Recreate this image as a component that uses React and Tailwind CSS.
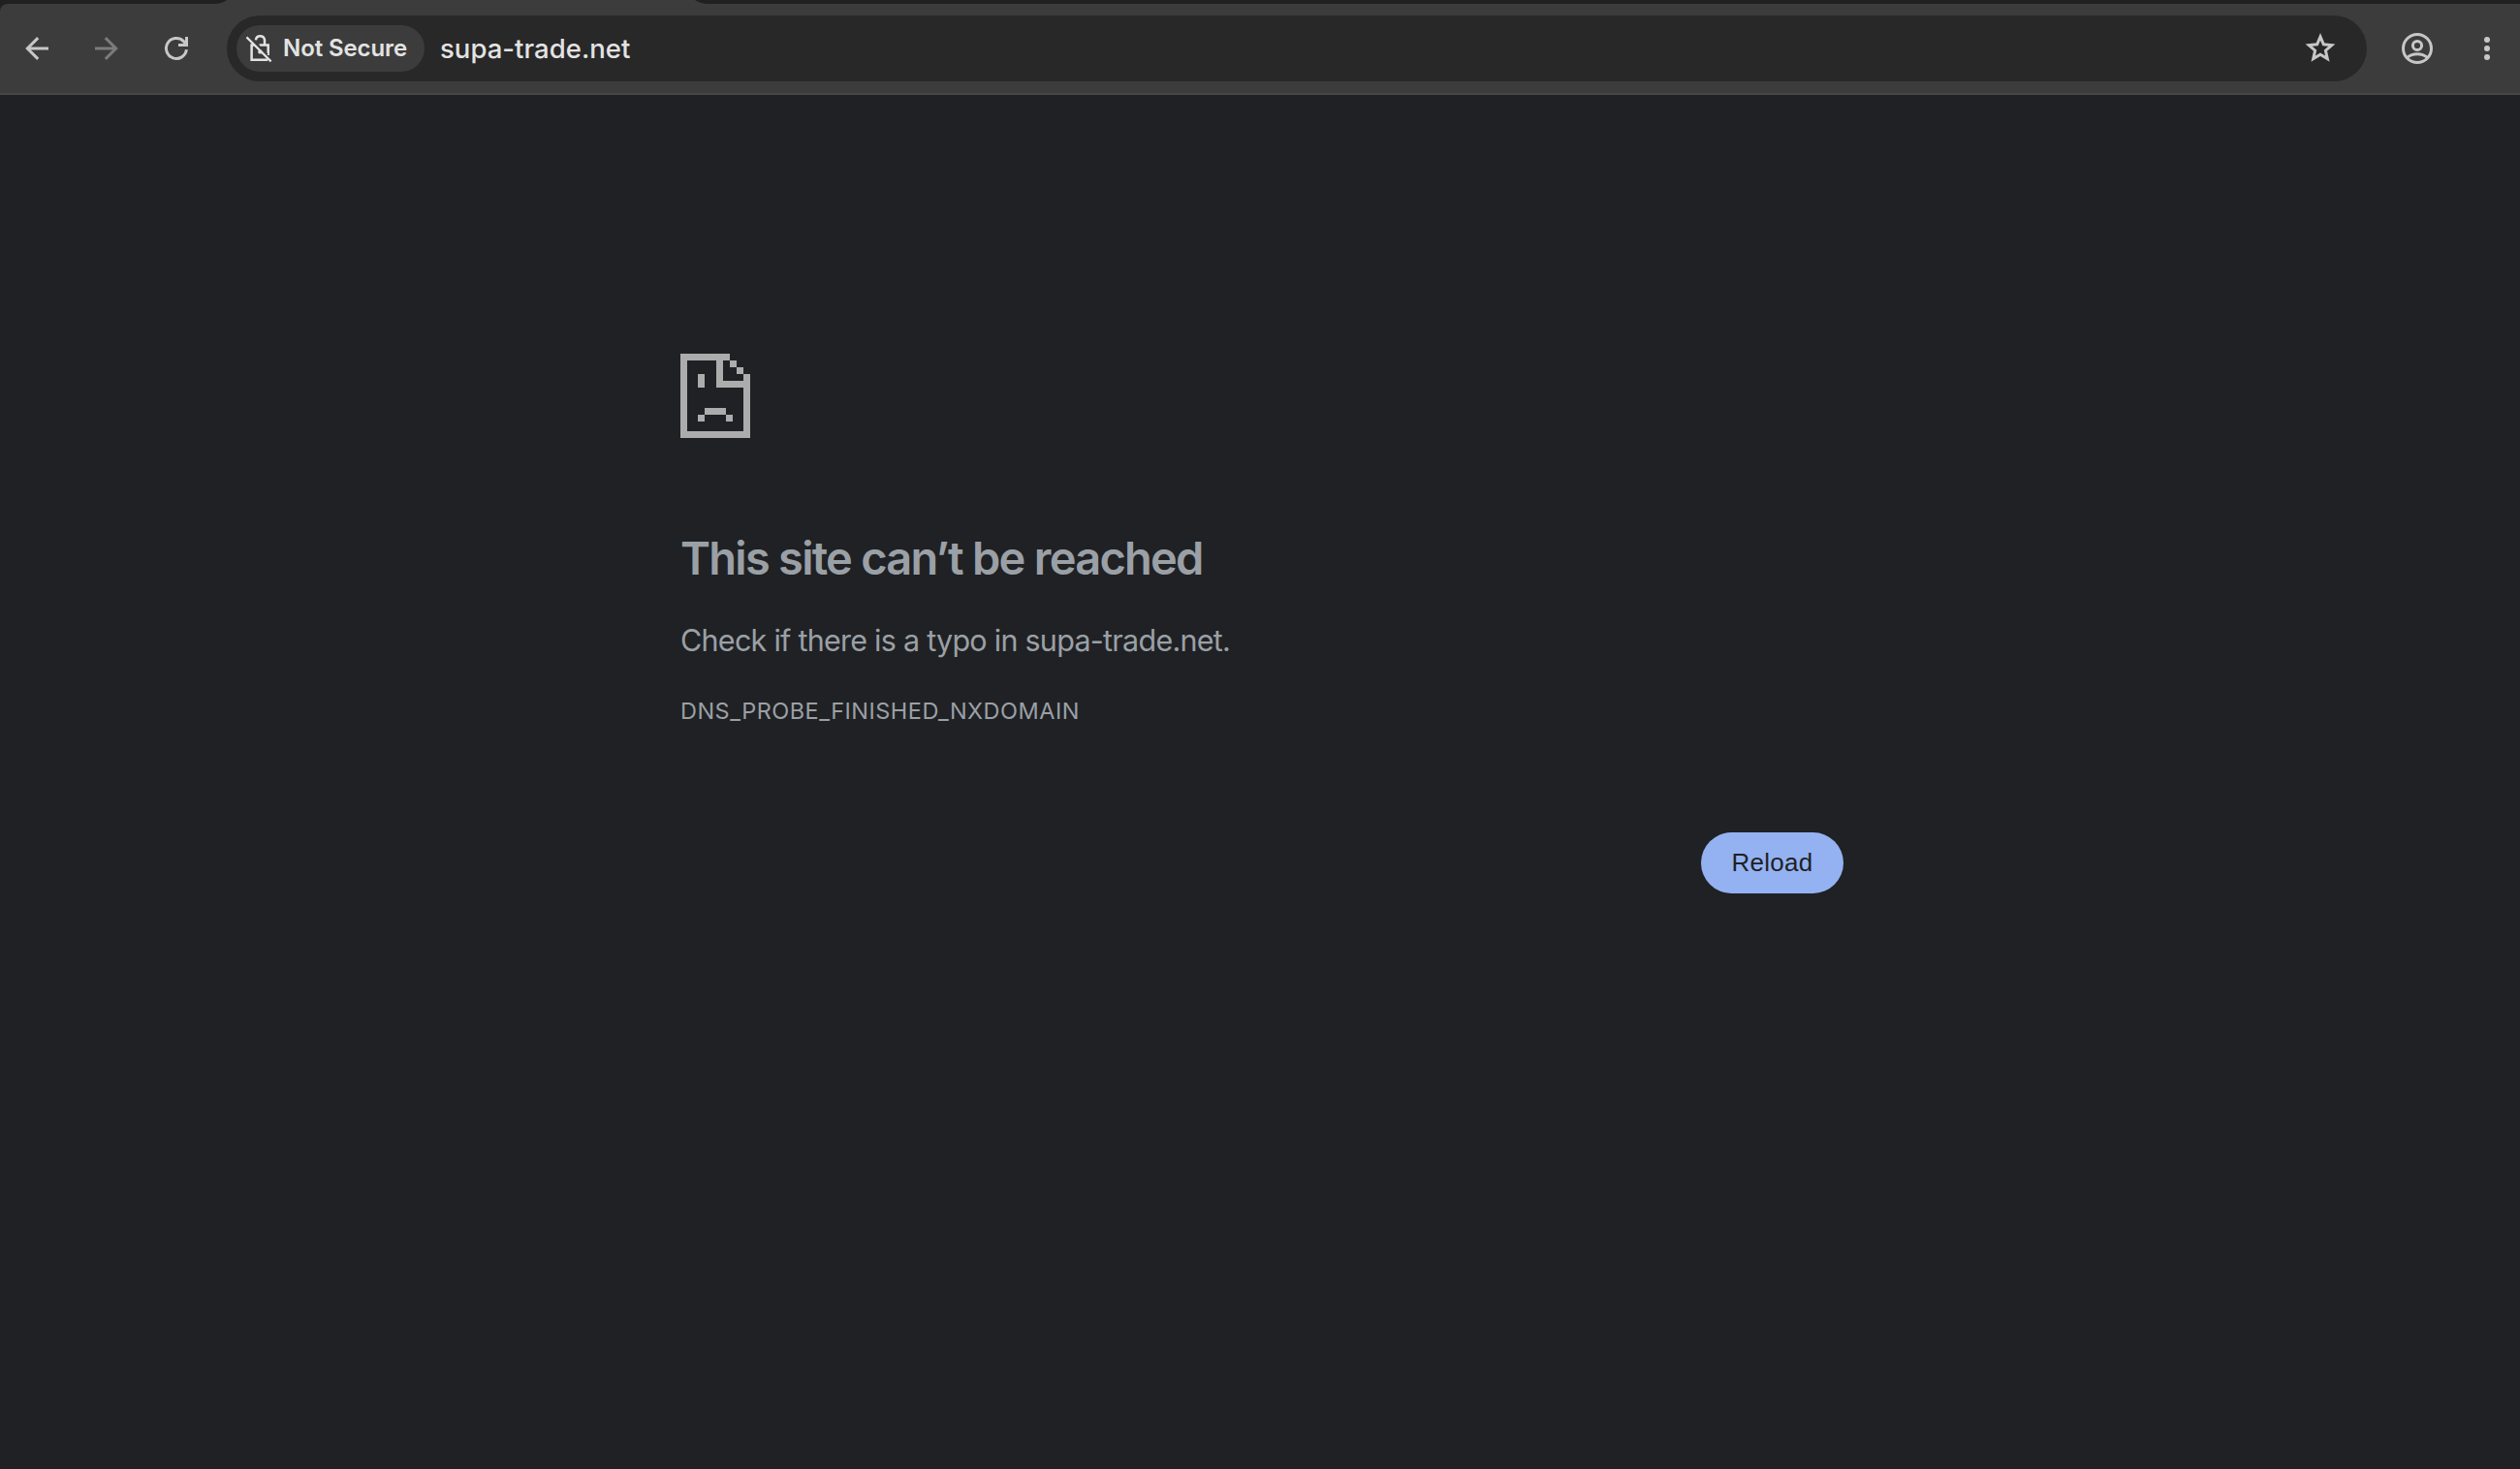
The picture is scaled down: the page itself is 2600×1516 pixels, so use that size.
import React from "react";

function BackIcon({ className }) {
  return (
    <svg className={className} width="32" height="32" viewBox="0 0 32 32" fill="none" stroke="currentColor" strokeWidth="3">
      <path d="M28 16H7M17.2 5.1L6.3 16l10.9 10.9" />
    </svg>
  );
}

function ReloadIcon() {
  return (
    <svg width="32" height="32" viewBox="0 0 32 32" fill="none" stroke="#c7c7c7" strokeWidth="3">
      <path d="M26.4 17.2A10.5 10.5 0 1 1 23.2 8.4L26 11.4" />
      <path d="M26.5 4v8.5H18" />
    </svg>
  );
}

function LockOffIcon() {
  return (
    <svg width="32" height="32" viewBox="0 0 32 32" fill="none" stroke="#e3e3e3" strokeWidth="2.5">
      <path d="M11 12.6H8.6V27.8H25.2M16.5 12.6H25.7V23" />
      <path d="M12.9 7.4A4.6 4.6 0 0 1 22 7.2V12.5" />
      <circle cx="17.4" cy="19.4" r="2.2" fill="#e3e3e3" stroke="none" />
      <path d="M5.4 2.8L25 22.4" stroke="#3c3c3c" strokeWidth="1.6" />
      <path d="M3.4 4.4L28.6 29.4" strokeWidth="2.2" />
    </svg>
  );
}

function StarIcon() {
  return (
    <svg width="36" height="36" viewBox="0 0 36 36" fill="none" stroke="#c7c7c7" strokeWidth="3">
      <path d="M18 5.9L21.35 13.8L29.8 14.6L23.4 20.2L25.3 28.6L18 24.2L10.7 28.6L12.6 20.2L6.2 14.6L14.65 13.8Z" />
    </svg>
  );
}

function ProfileIcon() {
  return (
    <svg width="36" height="36" viewBox="0 0 36 36" fill="none" stroke="#c7c7c7" strokeWidth="3">
      <circle cx="18" cy="18" r="14.5" />
      <circle cx="18" cy="15" r="4.6" />
      <path d="M7.6 27.4C13.5 22.6 22.5 22.6 28.4 27.4" />
    </svg>
  );
}

function SadFileIcon() {
  return (
    <svg width="72" height="87" viewBox="0 0 72 87" fill="#acacac" shapeRendering="crispEdges">
      <path d="M0 0H51V7H44V28H65V21H72V87H0ZM7 7V80H65V35H37V7Z" fillRule="evenodd" />
      <path d="M51 7h7v7h-7zM58 14h7v7h-7zM18 21h7v14h-7zM25 56h22v7H25zM18 63h7v7h-7zM47 63h7v7h-7z" />
    </svg>
  );
}

function TabStrip() {
  return (
    <div className="flex h-1 justify-between bg-[#3c3c3c]">
      <svg width="234" height="4" viewBox="0 0 234 4" className="shrink-0" fill="#1f2120">
        <path d="M0 0H234Q229 4 220 4H0Z" />
      </svg>
      <svg width="1883" height="4" viewBox="0 0 1883 4" className="shrink-0" fill="#1f2120">
        <path d="M0 0H1883V4H14Q6 4 0 0Z" />
      </svg>
    </div>
  );
}

function Toolbar() {
  return (
    <div className="bg-[#1f2120]">
      <div className="flex h-[94px] items-center rounded-tl-lg border-b-2 border-[#444746] bg-[#3c3c3c] pl-[22px]">
        <BackIcon className="shrink-0 text-[#c7c7c7]" />
        <BackIcon className="ml-10 shrink-0 rotate-180 text-[#7b7b7b]" />
        <div className="ml-10 shrink-0"><ReloadIcon /></div>
        <div className="ml-9 flex h-[68px] w-[2208px] shrink-0 items-center rounded-full bg-[#282828] pr-[30px] pl-[10px]">
          <div className="flex h-12 w-[194px] items-center rounded-full bg-[#3c3c3c] pl-[7px]">
            <LockOffIcon />
            <span className="ml-[9px] text-[24px] leading-8 font-semibold tracking-[-0.09px] whitespace-nowrap text-[#e3e3e3]">Not Secure</span>
          </div>
          <span className="ml-4 text-[27.5px] leading-9 font-medium tracking-[0.03px] whitespace-nowrap text-[#e3e3e3]">supa-trade.net</span>
          <div className="ml-auto"><StarIcon /></div>
        </div>
        <div className="ml-[34px] shrink-0"><ProfileIcon /></div>
        <div className="ml-[51px] flex w-[6px] shrink-0 flex-col gap-[3px]">
          <div className="size-[6px] rounded-full bg-[#c7c7c7]" />
          <div className="size-[6px] rounded-full bg-[#c7c7c7]" />
          <div className="size-[6px] rounded-full bg-[#c7c7c7]" />
        </div>
      </div>
    </div>
  );
}

export default function App() {
  return (
    <div className="flex h-[1516px] w-[2600px] flex-col overflow-hidden bg-[#202124] font-['Inter',sans-serif]">
      <TabStrip />
      <Toolbar />
      <main className="mx-auto flex w-[1200px] flex-col pt-[267px] text-[#9aa0a6]">
        <div className="ml-0.5"><SadFileIcon /></div>
        <h1 className="mt-[94px] ml-[2px] text-[47px] leading-[60px] font-semibold tracking-[-1.74px]">This site can’t be reached</h1>
        <p className="mt-[31px] ml-[2px] text-[30.5px] leading-[48px] tracking-[-0.74px]">Check if there is a typo in supa-trade.net.</p>
        <p className="mt-[31px] ml-[2px] text-[23.5px] leading-9 tracking-[0.48px]">DNS_PROBE_FINISHED_NXDOMAIN</p>
        <button className="mt-[107px] mr-[-2px] flex h-[63px] w-[147px] items-center justify-center self-end rounded-full bg-[#94b2f2] font-['Liberation_Sans',sans-serif] text-[26px] tracking-[0.3px] text-[#202124]">Reload</button>
      </main>
    </div>
  );
}
